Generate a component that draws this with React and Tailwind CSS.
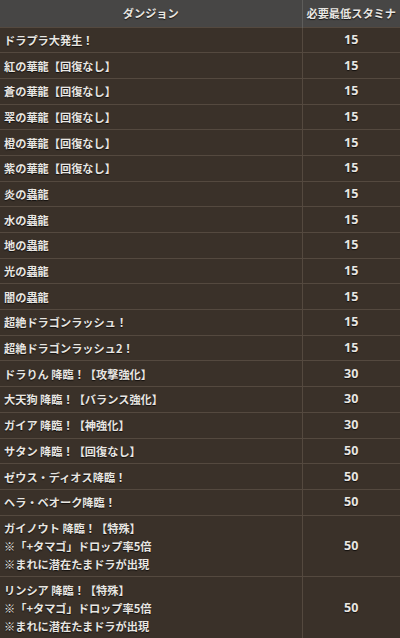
import React from 'react';

const rows = [
  { name: ['ドラプラ大発生！'], stamina: 15 },
  { name: ['紅の華龍【回復なし】'], stamina: 15 },
  { name: ['蒼の華龍【回復なし】'], stamina: 15 },
  { name: ['翠の華龍【回復なし】'], stamina: 15 },
  { name: ['橙の華龍【回復なし】'], stamina: 15 },
  { name: ['紫の華龍【回復なし】'], stamina: 15 },
  { name: ['炎の蟲龍'], stamina: 15 },
  { name: ['水の蟲龍'], stamina: 15 },
  { name: ['地の蟲龍'], stamina: 15 },
  { name: ['光の蟲龍'], stamina: 15 },
  { name: ['闇の蟲龍'], stamina: 15 },
  { name: ['超絶ドラゴンラッシュ！'], stamina: 15 },
  { name: ['超絶ドラゴンラッシュ2！'], stamina: 15 },
  { name: ['ドラりん 降臨！【攻撃強化】'], stamina: 30 },
  { name: ['大天狗 降臨！【バランス強化】'], stamina: 30 },
  { name: ['ガイア 降臨！【神強化】'], stamina: 30 },
  { name: ['サタン 降臨！【回復なし】'], stamina: 50 },
  { name: ['ゼウス・ディオス降臨！'], stamina: 50 },
  { name: ['ヘラ・ベオーク降臨！'], stamina: 50 },
  {
    name: ['ガイノウト 降臨！【特殊】', '※「+タマゴ」ドロップ率5倍', '※まれに潜在たまドラが出現'],
    stamina: 50,
  },
  {
    name: ['リンシア 降臨！【特殊】', '※「+タマゴ」ドロップ率5倍', '※まれに潜在たまドラが出現'],
    stamina: 50,
  },
];

export default function App() {
  return (
    <div
      className="w-[400px] h-[638px] overflow-hidden bg-[#3a3129] text-[#e8e6e2] font-bold text-[11.2px] leading-[18px] [text-shadow:0_1px_1px_rgba(0,0,0,0.7)]"
      style={{ fontFamily: '"Noto Sans CJK JP", "Noto Sans", sans-serif' }}
    >
      <table className="w-full border-collapse table-fixed">
        <colgroup>
          <col className="w-[302px]" />
          <col className="w-[98px]" />
        </colgroup>
        <thead>
          {/* Header */}
          <tr className="bg-[#474645] h-[27px]">
            <th className="border-r border-[#5e5d5b] text-center font-bold">ダンジョン</th>
            <th className="text-center font-bold">必要最低スタミナ</th>
          </tr>
        </thead>
        <tbody>
          {rows.map((row, i) => (
            <tr key={i} className="border-t border-[#54493f]">
              <td className="border-r border-[#54493f] px-[4px] py-[3.35px] align-middle">
                {row.name.map((line, j) => (
                  <div key={j} className="whitespace-nowrap">{line}</div>
                ))}
              </td>
              <td className="text-center align-middle text-[12.5px]" style={{ fontFamily: '"Open Sans", sans-serif' }}>
                {row.stamina}
              </td>
            </tr>
          ))}
        </tbody>
      </table>
    </div>
  );
}
